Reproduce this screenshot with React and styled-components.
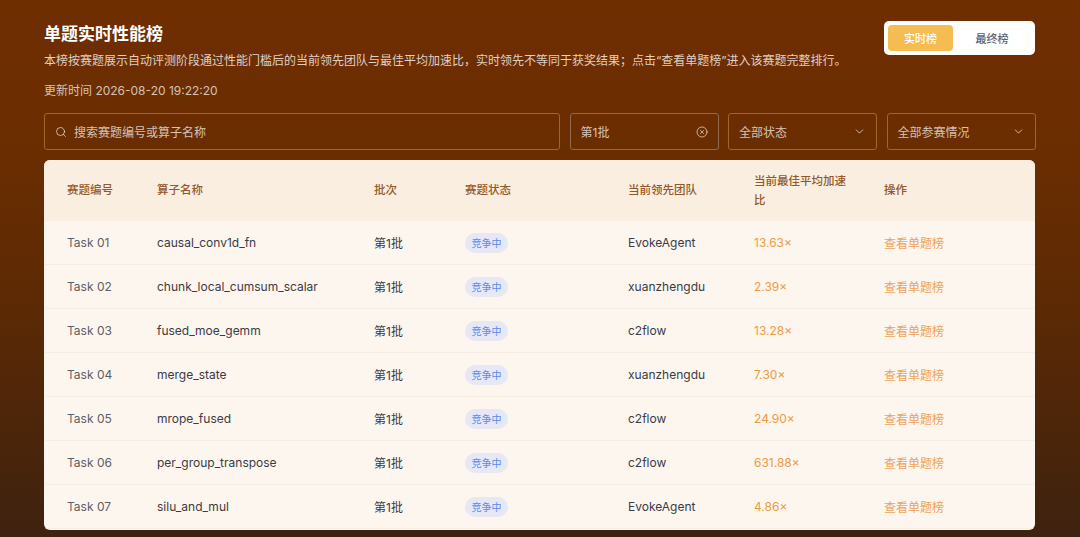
import React from "react";
import styled, { createGlobalStyle } from "styled-components";
import { Search, CircleX, ChevronDown } from "lucide-react";

const GlobalStyle = createGlobalStyle`
  html, body {
    margin: 0;
    height: 100%;
    overflow: hidden;
  }
  body {
    font-family: Inter, "Noto Sans CJK SC", "Liberation Sans", sans-serif;
  }
  * {
    box-sizing: border-box;
  }
`;

const tasks = [
  { id: "Task 01", name: "causal_conv1d_fn", team: "EvokeAgent", speed: "13.63×" },
  { id: "Task 02", name: "chunk_local_cumsum_scalar", team: "xuanzhengdu", speed: "2.39×" },
  { id: "Task 03", name: "fused_moe_gemm", team: "c2flow", speed: "13.28×" },
  { id: "Task 04", name: "merge_state", team: "xuanzhengdu", speed: "7.30×" },
  { id: "Task 05", name: "mrope_fused", team: "c2flow", speed: "24.90×" },
  { id: "Task 06", name: "per_group_transpose", team: "c2flow", speed: "631.88×" },
  { id: "Task 07", name: "silu_and_mul", team: "EvokeAgent", speed: "4.86×" },
];

const Page = styled.div`
  height: 537px;
  overflow: hidden;
  padding: 21px 45px 0 44px;
  background: linear-gradient(180deg, #6f2e00 0%, #6a2d01 30%, #5a2905 60%, #3e220f 100%);
`;

const Head = styled.header`
  display: flex;
  justify-content: space-between;
  align-items: flex-start;
`;

const Intro = styled.div`
  display: flex;
  flex-direction: column;
`;

const Title = styled.h1`
  margin: 0;
  font-size: 17px;
  line-height: 26px;
  font-weight: 600;
  color: #fff;
`;

const Desc = styled.p`
  margin: 5px 0 0;
  font-size: 12px;
  line-height: 18px;
  color: rgba(255, 255, 255, 0.78);
`;

const Updated = styled.p`
  margin: 12px 0 0;
  font-size: 12px;
  line-height: 18px;
  color: rgba(255, 255, 255, 0.72);
`;

const Switch = styled.div`
  display: flex;
  width: 151px;
  height: 34px;
  padding: 4px;
  border-radius: 5px;
  background: #fff;
`;

const SwitchItem = styled.div`
  flex: 1;
  display: flex;
  align-items: center;
  justify-content: center;
  border-radius: 4px;
  font-size: 11px;
  font-weight: 500;
  color: ${(p) => (p.$active ? "#fff" : "#5d6472")};
  background: ${(p) => (p.$active ? "#f5bc52" : "transparent")};
  &:first-child {
    flex: 0 0 65px;
  }
`;

const Filters = styled.div`
  display: grid;
  grid-template-columns: 516px 149px 149px 149px;
  gap: 9.5px;
  margin-top: 13px;
`;

const Field = styled.div`
  display: flex;
  align-items: center;
  height: 37px;
  padding: 0 10px;
  gap: 7px;
  border: 1px solid ${(p) => (p.$focus ? "#8f6a50" : "#a0662a")};
  border-radius: 3px;
  font-size: 12px;
  color: rgba(255, 255, 255, 0.72);
  svg {
    flex: none;
    color: rgba(255, 255, 255, 0.82);
  }
`;

const FieldText = styled.span`
  flex: 1;
  white-space: nowrap;
`;

const Card = styled.section`
  height: 370px;
  margin-top: 10px;
  overflow: hidden;
  border-radius: 6px;
  background: #fcf6ee;
`;

const Row = styled.div`
  display: grid;
  grid-template-columns: 90px 217px 91px 163px 126px 130px 1fr;
  align-items: center;
  padding-left: 23px;
  height: 44px;
  border-bottom: 1px solid #f7eee3;
  font-size: 12px;
  color: #3d3a45;
`;

const HeadRow = styled(Row)`
  height: 61px;
  margin-bottom: 0;
  border-bottom: 0;
  background: #f9eee0;
  font-size: 11.5px;
  font-weight: 500;
  line-height: 19px;
  color: #93582a;
`;

const Speedhead = styled.div`
  width: 100px;
`;

const TaskId = styled.div`
  color: #5f5d66;
`;

const Badge = styled.span`
  display: inline-flex;
  align-items: center;
  justify-content: center;
  width: 43px;
  height: 20px;
  border-radius: 10px;
  background: #e6e8f5;
  font-size: 10px;
  color: #5b8af0;
`;

const Speed = styled.div`
  color: #ee9a43;
`;

const Action = styled.a`
  color: #eda35a;
  text-decoration: none;
`;

export default function App() {
  return (
    <Page>
      <GlobalStyle />
      <Head>
        <Intro>
          <Title>单题实时性能榜</Title>
          <Desc>
            本榜按赛题展示自动评测阶段通过性能门槛后的当前领先团队与最佳平均加速比，实时领先不等同于获奖结果；点击“查看单题榜”进入该赛题完整排行。
          </Desc>
          <Updated>更新时间 2026-08-20 19:22:20</Updated>
        </Intro>
        <Switch>
          <SwitchItem $active>实时榜</SwitchItem>
          <SwitchItem>最终榜</SwitchItem>
        </Switch>
      </Head>
      <Filters>
        <Field>
          <Search size={12} strokeWidth={1.5} />
          <FieldText>搜索赛题编号或算子名称</FieldText>
        </Field>
        <Field $focus>
          <FieldText>第1批</FieldText>
          <CircleX size={12} strokeWidth={1.5} />
        </Field>
        <Field>
          <FieldText>全部状态</FieldText>
          <ChevronDown size={13} strokeWidth={1.5} />
        </Field>
        <Field>
          <FieldText>全部参赛情况</FieldText>
          <ChevronDown size={13} strokeWidth={1.5} />
        </Field>
      </Filters>
      <Card>
        <HeadRow>
          <div>赛题编号</div>
          <div>算子名称</div>
          <div>批次</div>
          <div>赛题状态</div>
          <div>当前领先团队</div>
          <Speedhead>当前最佳平均加速比</Speedhead>
          <div>操作</div>
        </HeadRow>
        {tasks.map((t) => (
          <Row key={t.id}>
            <TaskId>{t.id}</TaskId>
            <div>{t.name}</div>
            <div>第1批</div>
            <div>
              <Badge>竞争中</Badge>
            </div>
            <div>{t.team}</div>
            <Speed>{t.speed}</Speed>
            <Action href="#">查看单题榜</Action>
          </Row>
        ))}
      </Card>
    </Page>
  );
}
